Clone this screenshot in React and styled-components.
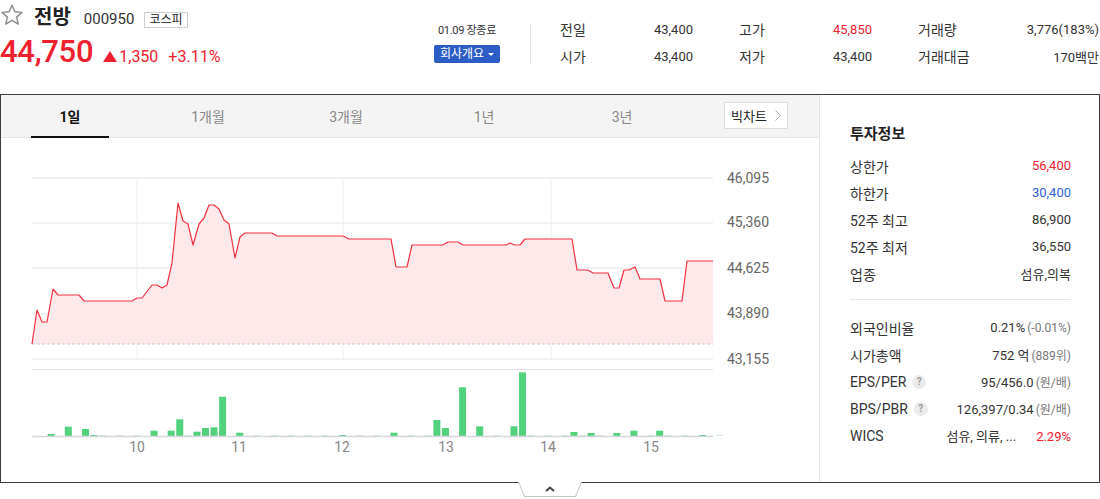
import React from 'react'
import styled, { createGlobalStyle } from 'styled-components'

const RED = '#f0212f'
const BLUE = '#2f62d8'

const GlobalStyle = createGlobalStyle`
  * { box-sizing: border-box; }
  body {
    margin: 0;
    background: #fff;
    color: #222;
    font-family: Roboto, "Noto Sans CJK KR", sans-serif;
  }
`

const priceLine = [
  [32, 344], [37, 310], [42, 322], [47, 322], [53, 289], [58, 295], [79, 295], [84, 301],
  [132, 301], [137, 298], [142, 298], [152, 285], [157, 285], [162, 288], [167, 285],
  [172, 263], [178, 203], [183, 221], [188, 224], [193, 245], [199, 224], [204, 218],
  [209, 205], [214, 205], [219, 209], [224, 220], [229, 224], [235, 258], [240, 237],
  [245, 233], [272, 233], [277, 236], [343, 236], [349, 239], [391, 239], [396, 267],
  [407, 267], [412, 245], [443, 245], [448, 242], [458, 242], [463, 245], [506, 245],
  [510, 243], [515, 245], [520, 245], [525, 239], [572, 239], [577, 270], [588, 270],
  [593, 273], [608, 273], [614, 288], [619, 288], [624, 270], [629, 270], [635, 267],
  [640, 279], [660, 279], [665, 301], [682, 301], [687, 261], [713, 261],
]

// slot index -> bar height (px above baseline)
const volumes = {
  0: 2, 2: 9.3, 4: 7, 5: 1, 12: 5.3, 14: 5.3, 15: 16.7, 17: 4.3, 18: 8, 19: 8.7,
  20: 39.3, 22: 3.3, 34: 1, 40: 3.3, 45: 16, 46: 8, 48: 48.7, 50: 9.7, 54: 9.7,
  55: 63.7, 61: 4, 63: 3, 66: 3, 68: 5.3, 71: 5.3, 76: 1,
}

const yTicks = [
  ['46,095', 179], ['45,360', 223], ['44,625', 269], ['43,890', 314], ['43,155', 360],
]
const xTicks = [['10', 137], ['11', 239], ['12', 342], ['13', 446], ['14', 548], ['15', 651]]

const tabs = ['1일', '1개월', '3개월', '1년', '3년']

const stats = [
  ['전일', '43,400'], ['고가', '45,850', RED], ['거래량', '3,776(183%)'],
  ['시가', '43,400'], ['저가', '43,400'], ['거래대금', '170백만'],
]

function App() {
  const linePts = priceLine.map(p => p.join(',')).join(' ')
  const areaPts = `${linePts} 713,344 32,344`
  return (
    <Page>
      <GlobalStyle />
      <Header>
        <Summary>
          <TitleRow>
            <StarIcon viewBox="0 0 24 24">
              <path d="M12 2.2l2.9 6.6 7.1.6-5.4 4.7 1.6 7-6.2-3.7-6.2 3.7 1.6-7L2 9.4l7.1-.6z" />
            </StarIcon>
            <Name>전방</Name>
            <Code>000950</Code>
            <Market>코스피</Market>
          </TitleRow>
          <PriceRow>
            <Price>44,750</Price>
            <Change><UpMark />1,350</Change>
            <Change>+3.11%</Change>
          </PriceRow>
        </Summary>
        <Status>
          <Closed>01.09 장종료</Closed>
          <CompanyBtn>회사개요 <BtnCaret /></CompanyBtn>
        </Status>
        <VLine />
        <Stats>
          {stats.map(([label, value, color]) => (
            <StatCell key={label}>
              <StatLabel>{label}</StatLabel>
              <StatValue color={color}>{value}</StatValue>
            </StatCell>
          ))}
        </Stats>
      </Header>

      <Panel>
        <ChartCol>
          <TabBar>
            {tabs.map((t, i) => (
              <Tab key={t} active={i === 0}>{t}</Tab>
            ))}
            <BigChart>
              빅차트
              <svg width="6" height="11" viewBox="0 0 6 11">
                <polyline points="0.5,0.5 5.5,5.5 0.5,10.5" fill="none" stroke="#aaa" />
              </svg>
            </BigChart>
          </TabBar>
          <ChartSvg viewBox="1 138 817 344" width="817" height="344">
            {[178, 223, 268, 314, 359].map(y => (
              <line key={y} x1="32" x2="713" y1={y} y2={y} stroke="#e4e4ea" strokeWidth="1" />
            ))}
            {[137, 343, 551].map(x => (
              <line key={x} x1={x} x2={x} y1="178" y2="359" stroke="#eeeef0" strokeWidth="1" />
            ))}
            <polygon points={areaPts} fill="#fde8ea" />
            <line x1="32" x2="713" y1="344" y2="344" stroke="#c9c9d3" strokeDasharray="3 2" />
            <polyline points={linePts} fill="none" stroke="#f2323f" strokeWidth="1.2" strokeLinejoin="round" />
            {yTicks.map(([t, y]) => (
              <text key={t} x="727" y={y} dominantBaseline="middle" fontSize="14" fill="#666">{t}</text>
            ))}
            <line x1="32" x2="713" y1="369.5" y2="369.5" stroke="#e0e0e6" />
            {Array.from({ length: 79 }, (_, i) => {
              const h = volumes[i]
              const x = 47.7 + 8.57 * i
              if (h) return <rect key={i} x={x} y={436 - h} width="7" height={h} fill="#53d27d" />
              return i % 2 === 0 && i > 5 ? (
                <rect key={i} x={x} y="435" width="7" height="1" fill="#cdeed7" />
              ) : null
            })}
            <line x1="32" x2="713" y1="436.5" y2="436.5" stroke="#d6d6de" strokeWidth="1.5" />
            {xTicks.map(([t, x]) => (
              <text key={t} x={x} y="448" textAnchor="middle" dominantBaseline="middle" fontSize="14" fill="#888">{t}</text>
            ))}
          </ChartSvg>
        </ChartCol>

        <InfoCol>
          <InfoTitle>투자정보</InfoTitle>
          <InfoList>
            <InfoRow><span>상한가</span><InfoValue color={RED}>56,400</InfoValue></InfoRow>
            <InfoRow><span>하한가</span><InfoValue color={BLUE}>30,400</InfoValue></InfoRow>
            <InfoRow><span>52주 최고</span><InfoValue>86,900</InfoValue></InfoRow>
            <InfoRow><span>52주 최저</span><InfoValue>36,550</InfoValue></InfoRow>
            <InfoRow><span>업종</span><InfoValue>섬유,의복</InfoValue></InfoRow>
          </InfoList>
          <HLine />
          <InfoList>
            <InfoRow><span>외국인비율</span><InfoValue>0.21%<Sub>(-0.01%)</Sub></InfoValue></InfoRow>
            <InfoRow><span>시가총액</span><InfoValue>752 억<Sub>(889위)</Sub></InfoValue></InfoRow>
            <InfoRow><span>EPS/PER<Help>?</Help></span><InfoValue>95/456.0<Sub>(원/배)</Sub></InfoValue></InfoRow>
            <InfoRow><span>BPS/PBR<Help>?</Help></span><InfoValue>126,397/0.34<Sub>(원/배)</Sub></InfoValue></InfoRow>
            <InfoRow>
              <span>WICS</span>
              <InfoValue>섬유, 의류, ...<Pct>2.29%</Pct></InfoValue>
            </InfoRow>
          </InfoList>
        </InfoCol>
      </Panel>

      <HandleRow>
        <svg width="64" height="16" viewBox="0 0 64 16">
          <path d="M0.5 0 L6.5 14.5 L57.5 14.5 L63.5 0" fill="#fff" stroke="#c4c4c4" />
          <polyline points="28,9 32,5.5 36,9" fill="none" stroke="#444" strokeWidth="2" />
        </svg>
      </HandleRow>
    </Page>
  )
}

export default App

const Page = styled.div`
  width: 1100px;
`
const Header = styled.header`
  display: flex;
  height: 94px;
`
const Summary = styled.div`
  width: 434px;
`
const TitleRow = styled.div`
  display: flex;
  align-items: baseline;
  height: 36px;
  padding-top: 1px;
`
const StarIcon = styled.svg`
  width: 24px;
  height: 24px;
  align-self: flex-start;
  margin-top: 2px;
  fill: none;
  stroke: #8a8a8a;
  stroke-width: 1.4;
  stroke-linejoin: round;
`
const Name = styled.span`
  margin-left: 10px;
  font-size: 20px;
  font-weight: 700;
  color: #222;
`
const Code = styled.span`
  margin-left: 13px;
  font-size: 15px;
  color: #333;
`
const Market = styled.span`
  margin-left: 10px;
  padding: 0 4px;
  border: 1px solid #cfcfcf;
  font-size: 12px;
  line-height: 14px;
  color: #222;
`
const PriceRow = styled.div`
  display: flex;
  align-items: baseline;
  color: ${RED};
`
const Price = styled.span`
  font-size: 31px;
  font-weight: 500;
  line-height: 31px;
  letter-spacing: -0.3px;
`
const Change = styled.span`
  margin-left: 10px;
  font-size: 16px;
  display: inline-flex;
  align-items: baseline;
`
const UpMark = styled.i`
  width: 0;
  height: 0;
  margin-right: 2px;
  border-left: 7px solid transparent;
  border-right: 7px solid transparent;
  border-bottom: 11px solid ${RED};
  align-self: center;
`
const Status = styled.div`
  width: 66px;
  padding-top: 24px;
  display: flex;
  flex-direction: column;
  align-items: center;
`
const Closed = styled.div`
  font-size: 11px;
  line-height: 14px;
  color: #333;
  white-space: nowrap;
  letter-spacing: -0.3px;
`
const CompanyBtn = styled.div`
  margin-top: 7px;
  width: 66px;
  height: 18px;
  background: #2c5cc5;
  border-radius: 2px;
  color: #fff;
  font-size: 12px;
  line-height: 18px;
  text-align: center;
`
const BtnCaret = styled.i`
  display: inline-block;
  vertical-align: middle;
  margin-left: 1px;
  border-left: 3px solid transparent;
  border-right: 3px solid transparent;
  border-top: 3px solid #fff;
`
const VLine = styled.div`
  margin: 23px 0 0 30px;
  width: 1px;
  height: 41px;
  background: #e3e3e3;
`
const Stats = styled.div`
  margin-left: 29px;
  padding-top: 19px;
  display: grid;
  grid-template-columns: 133px 133px 181px;
  grid-auto-rows: 20px;
  column-gap: 46px;
  row-gap: 7px;
`
const StatCell = styled.div`
  display: flex;
  justify-content: space-between;
  align-items: center;
`
const StatLabel = styled.span`
  font-size: 14px;
  color: #333;
`
const StatValue = styled.span`
  font-size: 13px;
  color: ${p => p.color || '#333'};
`
const Panel = styled.div`
  display: flex;
  height: 389px;
  border: 1px solid #3d3d3d;
`
const ChartCol = styled.div`
  width: 818px;
  display: flex;
  flex-direction: column;
`
const TabBar = styled.div`
  display: flex;
  align-items: center;
  height: 43px;
  padding-left: 30px;
  background: #f4f4f4;
  border-bottom: 1px solid #e6e6e6;
`
const Tab = styled.div`
  width: 78px;
  margin-right: 60px;
  align-self: stretch;
  margin-bottom: -1px;
  display: flex;
  align-items: center;
  justify-content: center;
  font-size: 14px;
  color: ${p => (p.active ? '#111' : '#888')};
  font-weight: ${p => (p.active ? 700 : 400)};
  border-bottom: 2px solid ${p => (p.active ? '#111' : 'transparent')};
`
const BigChart = styled.div`
  margin-left: auto;
  margin-right: 31px;
  width: 64px;
  height: 27px;
  margin-top: -1px;
  background: #fff;
  border: 1px solid #dcdcdc;
  font-size: 13px;
  color: #222;
  display: flex;
  align-items: center;
  justify-content: center;
  gap: 8px;
`
const ChartSvg = styled.svg`
  display: block;
  font-family: Roboto, sans-serif;
`
const InfoCol = styled.div`
  flex: 1;
  border-left: 1px solid #e6e6e6;
  padding: 29px 28px 0 30px;
`
const InfoTitle = styled.div`
  font-size: 15px;
  font-weight: 700;
  line-height: 20px;
  color: #222;
  margin-bottom: 8px;
`
const InfoList = styled.div`
  display: flex;
  flex-direction: column;
`
const InfoRow = styled.div`
  display: flex;
  justify-content: space-between;
  align-items: center;
  height: 27px;
  font-size: 14px;
  color: #333;
  span {
    display: inline-flex;
    align-items: center;
  }
`
const InfoValue = styled.div`
  font-size: 13px;
  color: ${p => p.color || '#333'};
  white-space: nowrap;
`
const Sub = styled.span`
  margin-left: 2px;
  font-size: 12px;
  color: #777;
`
const Pct = styled.span`
  margin-left: 20px;
  color: ${RED};
`
const Help = styled.i`
  margin-left: 6px;
  width: 14px;
  height: 14px;
  border-radius: 50%;
  background: #ebebeb;
  color: #9a9a9a;
  font-size: 10px;
  font-style: normal;
  font-weight: 700;
  display: inline-flex;
  align-items: center;
  justify-content: center;
`
const HLine = styled.div`
  height: 1px;
  background: #e6e6e6;
  margin: 12px 0 14px;
`
const HandleRow = styled.div`
  display: flex;
  justify-content: center;
  margin-top: -1px;
`
